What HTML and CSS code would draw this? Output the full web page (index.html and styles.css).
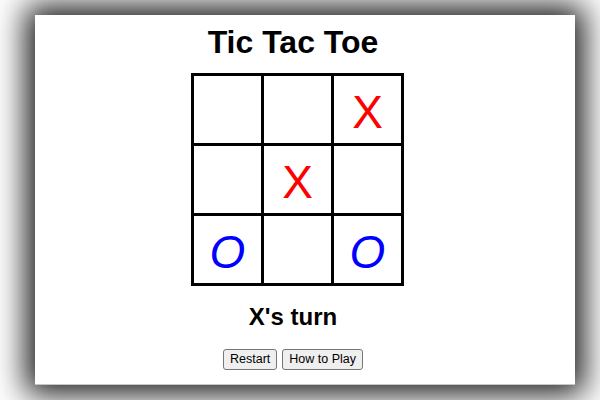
FILE: index.html
```html
<!DOCTYPE html>
<html>
<head>
<meta charset="utf-8">
<title>Tic Tac Toe</title>
<link rel="stylesheet" href="styles.css">
</head>
<body>
<div class="page">
  <h1 class="title">Tic Tac Toe</h1>
  <div class="board">
    <div class="cell"></div>
    <div class="cell"></div>
    <div class="cell x">X</div>
    <div class="cell"></div>
    <div class="cell x">X</div>
    <div class="cell"></div>
    <div class="cell o">O</div>
    <div class="cell"></div>
    <div class="cell o">O</div>
  </div>
  <h2 class="status">X's turn</h2>
  <div class="actions">
    <button class="btn">Restart</button>
    <button class="btn">How to Play</button>
  </div>
</div>
</body>
</html>
```

FILE: styles.css
```css
html, body {
  margin: 0;
  padding: 0;
  background: #ffffff;
}
body {
  box-sizing: border-box;
  width: 600px;
  height: 400px;
  padding: 15px 25px 15px 35px;
  font-family: "Comic Sans MS", "Liberation Sans", Arial, sans-serif;
  color: #000;
}
.page {
  box-sizing: border-box;
  width: 540px;
  height: 370px;
  padding: 9px 24px 0 0;
  background: #fff;
  box-shadow: 0 0 30px 9px rgba(0, 0, 0, 0.9);
  border-bottom: 1px solid #c8c8c8;
  display: flex;
  flex-direction: column;
  align-items: center;
}
.title {
  margin: 0;
  font-size: 32px;
  font-weight: bold;
  line-height: 37px;
}
.board {
  margin: 12px 0 0 9px;
  display: grid;
  grid-template-columns: repeat(3, 67px);
  grid-template-rows: repeat(3, 67px);
  gap: 3px;
  padding: 3px;
  background: #000;
}
.cell {
  background: #fff;
  display: flex;
  align-items: center;
  justify-content: center;
  font-size: 46px;
  line-height: 1;
  padding-top: 4px;
  box-sizing: border-box;
}
.cell.x {
  color: #ff0000;
}
.cell.o {
  color: #0000ff;
  font-style: italic;
}
.status {
  margin: 17px 0 0 0;
  font-size: 24px;
  font-weight: bold;
  line-height: 28px;
}
.actions {
  margin-top: 18px;
  display: flex;
  gap: 5px;
}
.btn {
  font-family: inherit;
  font-size: 12.5px;
  line-height: 15px;
  padding: 2px 6px;
  background: #efefef;
  border: 1px solid #767676;
  border-radius: 3px;
  color: #000;
}
```
